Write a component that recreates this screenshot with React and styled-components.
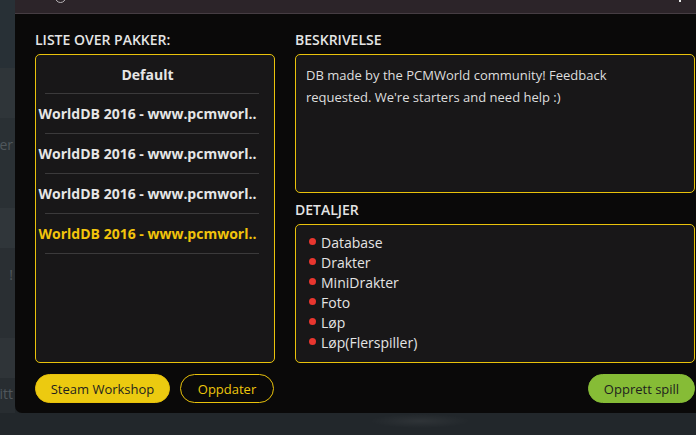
import React from 'react';
import styled, { createGlobalStyle } from 'styled-components';

const Global = createGlobalStyle`
  html, body { margin: 0; padding: 0; background: #22272b; }
  body { width: 696px; height: 435px; overflow: hidden; font-family: "Open Sans", "Noto Sans", sans-serif; }
  * { box-sizing: border-box; }
`;

const Page = styled.div`
  position: relative;
  width: 696px;
  height: 435px;
  overflow: hidden;
  background: radial-gradient(ellipse 50px 7px at 420px 421px, rgba(255,255,255,0.06), transparent), #22272b;
`;

const Backdrop = styled.div`
  display: flex;
  flex-direction: column;
  width: 15px;
`;

const BackRow = styled.div`
  height: ${p => p.$h}px;
  background: ${p => p.$bg};
  padding-top: ${p => p.$pt || 0}px;
  padding-right: 2px;
  display: flex;
  align-items: flex-start;
  justify-content: flex-end;
  white-space: nowrap;
  color: #50575c;
  font-size: 14px;
  line-height: 20px;
`;

const Dialog = styled.div`
  position: absolute;
  left: 15px;
  top: 0;
  width: 705px;
  height: 413px;
  background: #0a0909;
  border-bottom-left-radius: 7px;
  overflow: hidden;
  display: flex;
  flex-direction: column;
`;

const TitleBar = styled.div`
  height: 14px;
  flex-shrink: 0;
  background: #2c2429;
  border-bottom: 1px solid #463d43;
  display: flex;
  align-items: flex-end;
  padding-left: 40px;
  overflow: hidden;
`;

const Ring = styled.div`
  width: 11px;
  height: 11px;
  border: 1.5px solid #b9b5b8;
  border-radius: 50%;
  margin-bottom: 10px;
  flex-shrink: 0;
`;

const Dot = styled.div`
  width: 2px;
  height: 2px;
  background: #e8e8e8;
  align-self: flex-start;
  margin-left: auto;
  margin-right: 39px;
`;

const Body = styled.div`
  display: grid;
  grid-template-columns: 240px 400px;
  column-gap: 20px;
  padding: 16px 20px 10px 20px;
`;

const Column = styled.div`
  display: flex;
  flex-direction: column;
`;

const Label = styled.div`
  font-size: 14px;
  font-weight: 600;
  line-height: 20px;
  color: #e4e4e4;
  margin-top: ${p => p.$mt || 0}px;
  margin-bottom: 4px;
`;

const Box = styled.div`
  height: ${p => p.$h}px;
  border: 1px solid #e9c20b;
  border-radius: 5px;
  background: #181718;
`;

const ListBox = styled(Box)`
  padding-right: 15px;
  display: flex;
  flex-direction: column;
`;

const ListItem = styled.div`
  height: 39px;
  display: flex;
  align-items: center;
  justify-content: center;
  white-space: nowrap;
  font-size: 14px;
  font-weight: 700;
  color: ${p => (p.$selected ? '#f2c40c' : '#e6e6e6')};
  &:first-child { height: 38px; }
`;

const Divider = styled.div`
  height: 1px;
  background: #3b3a3b;
  margin-left: 9px;
`;

const DescBox = styled(Box)`
  padding: 9px 10px;
  font-size: 13px;
  line-height: 22px;
  color: #dedede;
`;

const DetailBox = styled(Box)`
  padding: 7px 13px;
`;

const DetailRow = styled.div`
  display: flex;
  align-items: center;
  height: 20px;
  font-size: 14px;
  color: #e4e4e4;
`;

const Bullet = styled.span`
  width: 7px;
  height: 7px;
  border-radius: 50%;
  background: #e8362f;
  margin-right: 5px;
  flex-shrink: 0;
  position: relative;
  top: -1px;
`;

const ButtonRow = styled.div`
  display: flex;
  gap: 10px;
  margin-top: 11px;
  justify-content: ${p => (p.$end ? 'flex-end' : 'flex-start')};
`;

const Button = styled.button`
  width: ${p => p.$w}px;
  height: 29px;
  border-radius: 15px;
  font-family: inherit;
  font-size: 13px;
  padding: 0;
  cursor: pointer;
  border: 1px solid ${p => (p.$variant === 'green' ? '#86bc36' : '#e9c20b')};
  background: ${p => (p.$variant === 'yellow' ? '#ecca10' : p.$variant === 'green' ? '#86bc36' : 'transparent')};
  color: ${p => (p.$variant === 'outline' ? '#eec60c' : '#1e1e1e')};
`;

const backRows = [
  { h: 68, bg: '#283036' },
  { h: 50, bg: '#2f3539' },
  { h: 90, bg: '#2a3034', t: 'er', pt: 135 - 118 },
  { h: 40, bg: '#30363a' },
  { h: 90, bg: '#2a2f33', t: '!', pt: 17 },
  { h: 40, bg: '#2f3438' },
  { h: 35, bg: '#282d31', t: 'ritt', pt: 6 },
];

const items = [
  'WorldDB 2016 - www.pcmworl..',
  'WorldDB 2016 - www.pcmworl..',
  'WorldDB 2016 - www.pcmworl..',
  'WorldDB 2016 - www.pcmworl..',
];

const details = ['Database', 'Drakter', 'MiniDrakter', 'Foto', 'Løp', 'Løp(Flerspiller)'];

export default function App() {
  return (
    <Page>
      <Global />
      <Backdrop>
        {backRows.map((r, i) => (
          <BackRow key={i} $h={r.h} $bg={r.bg} $pt={r.pt}>{r.t || ''}</BackRow>
        ))}
      </Backdrop>
      <Dialog>
        <TitleBar>
          <Ring />
          <Dot />
        </TitleBar>
        <Body>
          <Column>
            <Label>LISTE OVER PAKKER:</Label>
            <ListBox $h={309}>
              <ListItem>Default</ListItem>
              <Divider />
              {items.map((t, i) => (
                <React.Fragment key={i}>
                  <ListItem $selected={i === 3}>{t}</ListItem>
                  <Divider />
                </React.Fragment>
              ))}
            </ListBox>
            <ButtonRow>
              <Button $variant="yellow" $w={135}>Steam Workshop</Button>
              <Button $variant="outline" $w={94}>Oppdater</Button>
            </ButtonRow>
          </Column>
          <Column>
            <Label>BESKRIVELSE</Label>
            <DescBox $h={139}>
              DB made by the PCMWorld community! Feedback
              <br />
              requested. We're starters and need help :)
            </DescBox>
            <Label $mt={7}>DETALJER</Label>
            <DetailBox $h={139}>
              {details.map(d => (
                <DetailRow key={d}>
                  <Bullet />
                  {d}
                </DetailRow>
              ))}
            </DetailBox>
            <ButtonRow $end>
              <Button $variant="green" $w={107}>Opprett spill</Button>
            </ButtonRow>
          </Column>
        </Body>
      </Dialog>
    </Page>
  );
}
